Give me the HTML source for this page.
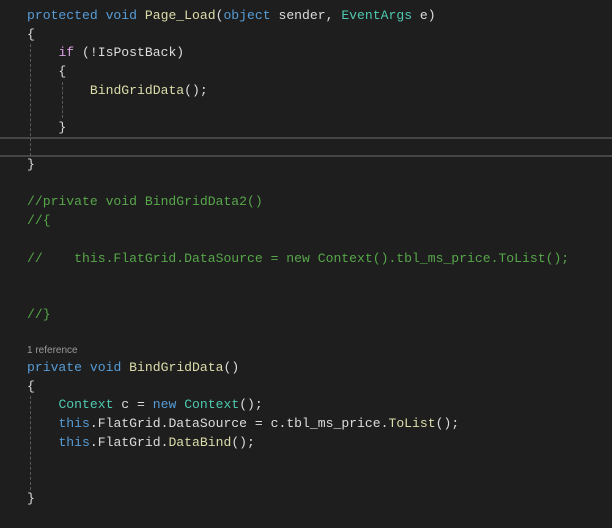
<!DOCTYPE html>
<html><head><meta charset="utf-8"><style>
html,body{margin:0;padding:0;background:#1e1e1e;width:612px;height:528px;overflow:hidden}
.l{position:absolute;left:27px;height:19px;line-height:19px;font-family:"Liberation Mono",monospace;font-size:13.1px;color:#dcdcdc;white-space:pre}
.k{color:#569cd6}.m{color:#dcdcaa}.t{color:#4ec9b0}.c{color:#57a64a}.p{color:#d8a0df}
.cl{position:absolute;left:27px;font-family:"Liberation Sans",sans-serif;font-size:10px;color:#999;white-space:pre}
.g{position:absolute;width:0;border-left:1px dashed #5a5a5a}
.hl{position:absolute;left:0;width:612px;top:137px;height:16px;border-top:2px solid #464646;border-bottom:2px solid #464646}
</style></head><body>
<div class="cl" style="top:-8px">0 references</div>
<div class="hl"></div>
<div class="g" style="left:30px;top:44px;height:112px"></div>
<div class="g" style="left:62px;top:82px;height:36px"></div>
<div class="g" style="left:30px;top:396px;height:94px"></div>
<div class="l" style="top:6px"><span class="k">protected</span> <span class="k">void</span> <span class="m">Page_Load</span>(<span class="k">object</span> sender, <span class="t">EventArgs</span> e)</div>
<div class="l" style="top:25px">{</div>
<div class="l" style="top:43px">    <span class="p">if</span> (!IsPostBack)</div>
<div class="l" style="top:62px">    {</div>
<div class="l" style="top:81px">        <span class="m">BindGridData</span>();</div>
<div class="l" style="top:118px">    }</div>
<div class="l" style="top:155px">}</div>
<div class="l c" style="top:192px">//private void BindGridData2()</div>
<div class="l c" style="top:211px">//{</div>
<div class="l c" style="top:249px">//    this.FlatGrid.DataSource = new Context().tbl_ms_price.ToList();</div>
<div class="l c" style="top:305px">//}</div>
<div class="cl" style="top:345px">1 reference</div>
<div class="l" style="top:358px"><span class="k">private</span> <span class="k">void</span> <span class="m">BindGridData</span>()</div>
<div class="l" style="top:377px">{</div>
<div class="l" style="top:395px">    <span class="t">Context</span> c = <span class="k">new</span> <span class="t">Context</span>();</div>
<div class="l" style="top:414px">    <span class="k">this</span>.FlatGrid.DataSource = c.tbl_ms_price.<span class="m">ToList</span>();</div>
<div class="l" style="top:433px">    <span class="k">this</span>.FlatGrid.<span class="m">DataBind</span>();</div>
<div class="l" style="top:489px">}</div>
</body></html>
